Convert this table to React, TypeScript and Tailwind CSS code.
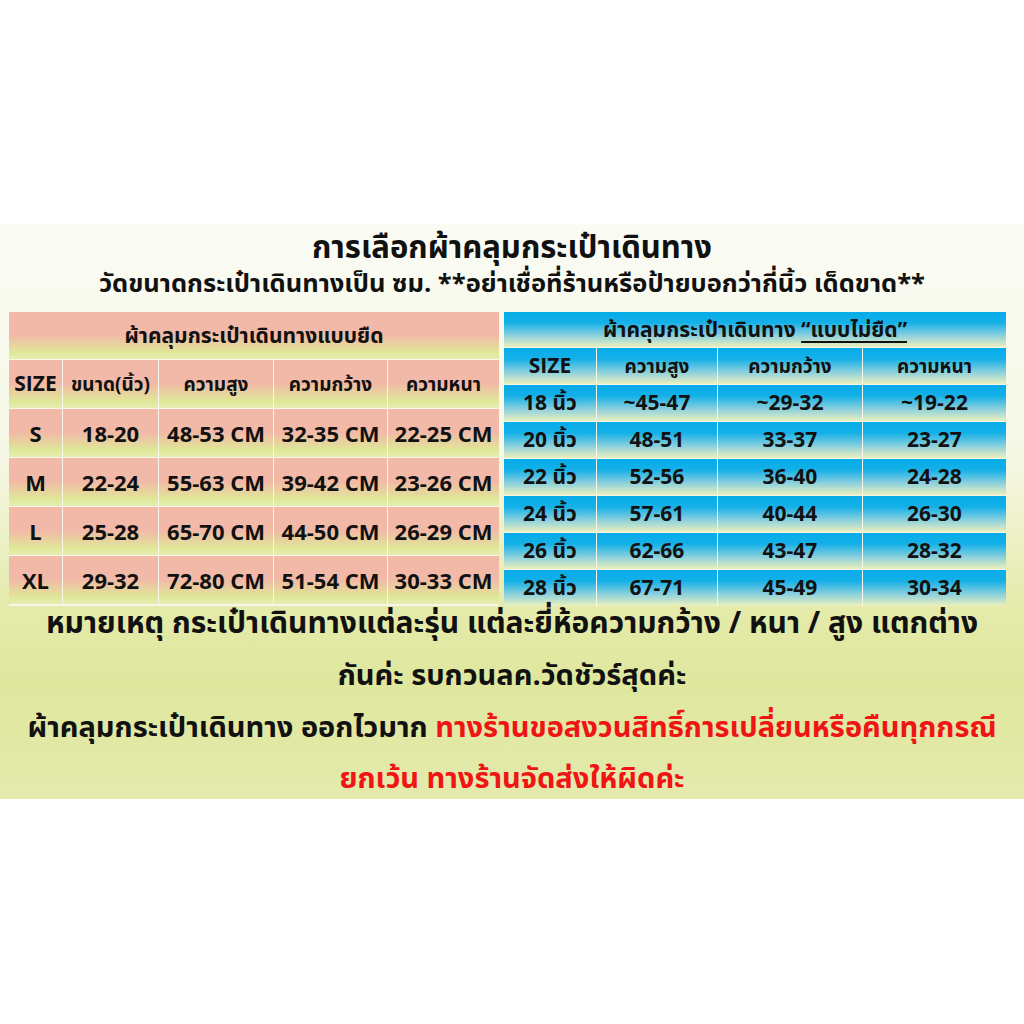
import React from "react";

const pinkCell =
  "flex items-center justify-center bg-[linear-gradient(180deg,#f2b8a8_0%,#f2b8a8_48%,#dfe897_86%,#e6edb4_100%)]";
const blueCell =
  "flex items-center justify-center bg-[linear-gradient(180deg,#07ace9_0%,#14b0e8_30%,#8fd1dc_68%,#ecf1bd_100%)]";

const stretchRows = [
  ["S", "18-20", "48-53 CM", "32-35 CM", "22-25 CM"],
  ["M", "22-24", "55-63 CM", "39-42 CM", "23-26 CM"],
  ["L", "25-28", "65-70 CM", "44-50 CM", "26-29 CM"],
  ["XL", "29-32", "72-80 CM", "51-54 CM", "30-33 CM"],
];

const fixedRows = [
  ["18 นิ้ว", "~45-47", "~29-32", "~19-22"],
  ["20 นิ้ว", "48-51", "33-37", "23-27"],
  ["22 นิ้ว", "52-56", "36-40", "24-28"],
  ["24 นิ้ว", "57-61", "40-44", "26-30"],
  ["26 นิ้ว", "62-66", "43-47", "28-32"],
  ["28 นิ้ว", "67-71", "45-49", "30-34"],
];

function StretchTable() {
  return (
    <div className="grid w-[490px] grid-cols-[53px_95px_114px_113px_111px] grid-rows-[47px_48px_48px_48px_48px_48px] gap-px bg-[#f8f6e8]">
      <div className={`${pinkCell} col-span-5 text-[21px]`}>ผ้าคลุมกระเป๋าเดินทางแบบยืด</div>
      {["SIZE", "ขนาด(นิ้ว)", "ความสูง", "ความกว้าง", "ความหนา"].map((h) => (
        <div key={h} className={`${pinkCell} ${h === "SIZE" ? "text-[21px]" : "text-[19px]"}`}>
          {h}
        </div>
      ))}
      {stretchRows.map((row) =>
        row.map((c, i) => (
          <div key={row[0] + i} className={`${pinkCell} text-[22px]`}>
            {c}
          </div>
        ))
      )}
    </div>
  );
}

function FixedTable() {
  return (
    <div className="grid w-[502px] grid-cols-[92px_120px_144px_143px] grid-rows-[35px_36px_36px_36px_36px_36px_36px_36px] gap-px bg-[#f8f6e8]">
      <div className={`${blueCell} col-span-4 text-[21px]`}>
        ผ้าคลุมกระเป๋าเดินทาง&nbsp;<span className="underline underline-offset-4">“แบบไม่ยืด”</span>
      </div>
      {["SIZE", "ความสูง", "ความกว้าง", "ความหนา"].map((h) => (
        <div key={h} className={`${blueCell} ${h === "SIZE" ? "text-[21px]" : "text-[19px]"}`}>
          {h}
        </div>
      ))}
      {fixedRows.map((row) =>
        row.map((c, i) => (
          <div key={row[0] + i} className={`${blueCell} text-[21px]`}>
            {c}
          </div>
        ))
      )}
    </div>
  );
}

export default function App() {
  return (
    <div className="flex h-[1024px] w-[1024px] flex-col bg-white text-[#111] [font-family:'Open_Sans','Noto_Sans_Thai','Noto_Sans',sans-serif]">
      <div className="h-[224px]" />
      <div className="flex h-[575px] flex-col items-center overflow-hidden bg-[linear-gradient(180deg,#fafbf4_0%,#f6f8e6_40%,#e4eaa8_68%,#dfe79e_80%,#e3eaac_100%)] font-bold">
        <div className="mt-[4px] h-[36px] text-[31px] leading-[36px]">การเลือกผ้าคลุมกระเป๋าเดินทาง</div>
        <div className="h-[36px] text-[25.5px] leading-[36px]">
          วัดขนาดกระเป๋าเดินทางเป็น ซม. **อย่าเชื่อที่ร้านหรือป้ายบอกว่ากี่นิ้ว เด็ดขาด**
        </div>
        <div className="mt-[12px] flex w-full gap-[5px] pl-[9px]">
          <StretchTable />
          <FixedTable />
        </div>
        <div className="mt-[-10px] flex flex-col items-center whitespace-nowrap leading-[52px]">
          <div className="text-[30px]">
            หมายเหตุ กระเป๋าเดินทางแต่ละรุ่น แต่ละยี่ห้อความกว้าง / หนา / สูง แตกต่าง
          </div>
          <div className="text-[29px]">กันค่ะ รบกวนลค.วัดชัวร์สุดค่ะ</div>
          <div className="text-[29px]">
            ผ้าคลุมกระเป๋าเดินทาง ออกไวมาก{" "}
            <span className="text-[#f01414]">ทางร้านขอสงวนสิทธิ์การเปลี่ยนหรือคืนทุกกรณี</span>
          </div>
          <div className="h-[49px] text-[29px] leading-[49px] text-[#f01414]">ยกเว้น ทางร้านจัดส่งให้ผิดค่ะ</div>
        </div>
      </div>
    </div>
  );
}
